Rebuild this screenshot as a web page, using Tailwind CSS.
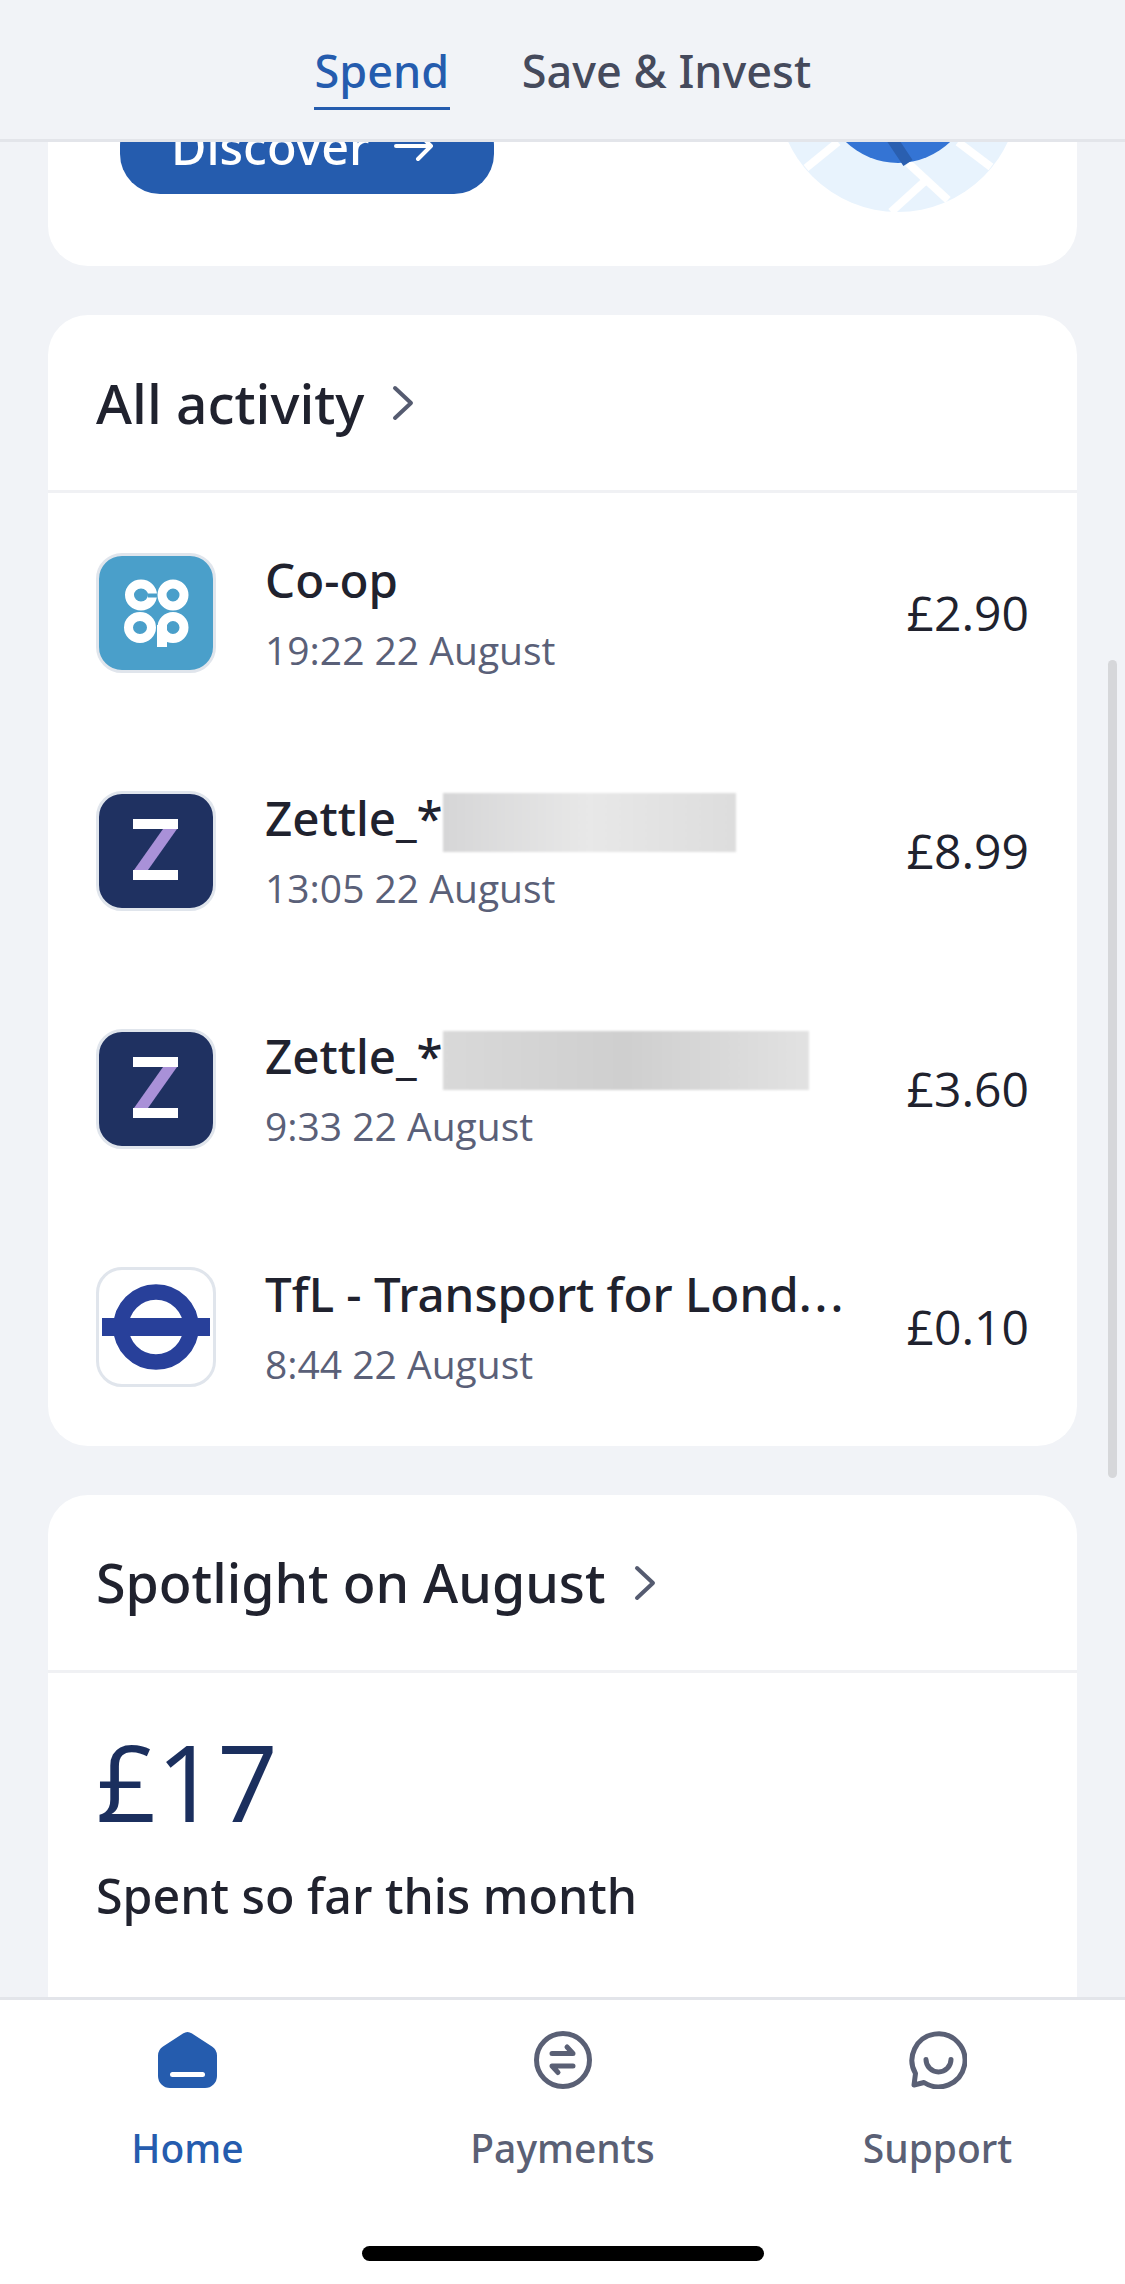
<!DOCTYPE html>
<html lang="en">
  <head>
    <meta charset="UTF-8" />
    <meta name="viewport" content="width=device-width, initial-scale=1.0" />
    <title>Spend</title>
    <script src="https://cdn.jsdelivr.net/npm/@tailwindcss/browser@4"></script>
  </head>
  <body class="bg-[#f1f3f7]">
    <div class="relative w-[1125px] h-[2284px] flex flex-col overflow-hidden font-['Open_Sans',sans-serif] text-[#20222e]">
      <!-- Top tabs -->
      <header class="h-[142px] shrink-0 flex justify-center gap-[72px] border-b-[3px] border-[#e3e5ea] bg-[#f1f3f7]">
        <div class="h-[110px] pt-[41px] border-b-[3px] border-[#255cae] text-[#255cae] text-[45px] leading-[60px] font-['Noto_Sans',sans-serif] font-medium w-[136px] text-center">Spend</div>
        <div class="pt-[41px] text-[#454a5c] text-[45px] leading-[60px] font-['Noto_Sans',sans-serif] font-medium">Save &amp; Invest</div>
      </header>

      <main class="flex-1 min-h-0 overflow-hidden flex flex-col gap-[49px] px-[48px]">
        <!-- Promo card, scrolled under the tabs -->
        <section class="h-[124px] shrink-0 flex justify-between pl-[72px] pr-[56px] bg-white rounded-b-[40px]">
          <div class="w-[374px] h-[88px] -mt-[36px] pb-[8px] flex items-center pl-[51px] gap-[24px] rounded-[40px] bg-[#255cae] text-white text-[48.5px] font-['Noto_Sans',sans-serif] font-medium">
            <span class="leading-[60px]">Discover</span>
            <svg class="w-[40px] h-[34px]" viewBox="0 0 40 34" fill="none" stroke="#fff" stroke-width="4" stroke-linecap="round" stroke-linejoin="round"><path d="M2 17h35M24 4l13 13-13 13" /></svg>
          </div>
          <svg class="w-[240px] h-[72px]" viewBox="780 142 240 72">
            <circle cx="897" cy="91" r="121" fill="#e8f3fd" />
            <path d="M837 142l-32 26M957 142l33 25M907 163l40 37M923 182l-33 30" stroke="#fff" stroke-width="8" fill="none" />
            <circle cx="897" cy="88" r="75" fill="#3474d4" />
            <path d="M885 130l22 33" stroke="#2a5fb0" stroke-width="11" fill="none" />
          </svg>
        </section>

        <!-- All activity -->
        <section class="shrink-0 bg-white rounded-[40px]">
          <div class="h-[178px] flex items-center gap-[28px] px-[48px] border-b-[3px] border-[#f0f1f4]">
            <h2 class="text-[55px] leading-[68px] font-['Noto_Sans',sans-serif] font-medium">All activity</h2>
            <svg class="w-[22px] h-[36px]" viewBox="0 0 22 36" fill="none" stroke="#555b70" stroke-width="4" stroke-linecap="round" stroke-linejoin="round"><path d="M3 3l16 15L3 33" /></svg>
          </div>
          <div class="flex flex-col gap-[118px] pt-[60px] pb-[59px] pl-[48px] pr-[48px]">
            <div class="h-[120px] flex items-center">
              <div class="w-[120px] h-[120px] shrink-0 rounded-[26px] border-[3px] border-[#e0e5ec] bg-[#4a9fca] overflow-hidden">
                <svg class="w-full h-full" viewBox="3 3 114 114">
                  <ellipse cx="45" cy="42" rx="11.5" ry="11" fill="none" stroke="#fff" stroke-width="9" />
                  <rect x="52" y="40.5" width="9" height="4" fill="#4a9fca" />
                  <ellipse cx="77" cy="42" rx="11" ry="11" fill="none" stroke="#fff" stroke-width="9" />
                  <ellipse cx="44" cy="74.5" rx="11.5" ry="11" fill="none" stroke="#fff" stroke-width="9" />
                  <ellipse cx="77" cy="74.5" rx="11" ry="11" fill="none" stroke="#fff" stroke-width="9" />
                  <rect x="61" y="72" width="10" height="22" fill="#fff" />
                </svg>
              </div>
              <div class="flex-1 min-w-0 pl-[49px]">
                <p class="text-[47.5px] leading-[60px] font-['Noto_Sans',sans-serif] font-medium">Co-op</p>
                <p class="mt-[14px] text-[39px] leading-[52px] text-[#5a6078]">19:22 22 August</p>
              </div>
              <p class="text-[48px] leading-[64px] pl-[24px]">£2.90</p>
            </div>

            <div class="h-[120px] flex items-center">
              <div class="w-[120px] h-[120px] shrink-0 rounded-[26px] border-[3px] border-[#e0e5ec] bg-[#1f3161] overflow-hidden">
                <svg class="w-full h-full" viewBox="3 3 114 114">
                  <path d="M37 28h45v10H37zM37 79h45v10H37z" fill="#fff" />
                  <path d="M67 38h14L52 79H38z" fill="#a991d8" />
                </svg>
              </div>
              <div class="flex-1 min-w-0 pl-[49px]">
                <div class="flex items-start h-[60px]">
                  <p class="text-[47.5px] leading-[60px] font-['Noto_Sans',sans-serif] font-medium">Zettle_*</p>
                  <div class="mt-[5px] w-[293px] h-[59px] bg-gradient-to-r from-[#d6d6d7] via-[#e8e8e8] to-[#dddddd] blur-[1px]"></div>
                </div>
                <p class="mt-[14px] text-[39px] leading-[52px] text-[#5a6078]">13:05 22 August</p>
              </div>
              <p class="text-[48px] leading-[64px] pl-[24px]">£8.99</p>
            </div>

            <div class="h-[120px] flex items-center">
              <div class="w-[120px] h-[120px] shrink-0 rounded-[26px] border-[3px] border-[#e0e5ec] bg-[#1f3161] overflow-hidden">
                <svg class="w-full h-full" viewBox="3 3 114 114">
                  <path d="M37 28h45v10H37zM37 79h45v10H37z" fill="#fff" />
                  <path d="M67 38h14L52 79H38z" fill="#a991d8" />
                </svg>
              </div>
              <div class="flex-1 min-w-0 pl-[49px]">
                <div class="flex items-start h-[60px]">
                  <p class="text-[47.5px] leading-[60px] font-['Noto_Sans',sans-serif] font-medium">Zettle_*</p>
                  <div class="mt-[5px] w-[366px] h-[59px] bg-gradient-to-r from-[#d9d9d9] via-[#cfcfcf] to-[#e2e2e2] blur-[1px]"></div>
                </div>
                <p class="mt-[14px] text-[39px] leading-[52px] text-[#5a6078]">9:33 22 August</p>
              </div>
              <p class="text-[48px] leading-[64px] pl-[24px]">£3.60</p>
            </div>

            <div class="h-[120px] flex items-center">
              <div class="w-[120px] h-[120px] shrink-0 rounded-[26px] border-[3px] border-[#e0e5ec] bg-white overflow-hidden">
                <svg class="w-full h-full" viewBox="3 3 114 114">
                  <circle cx="60" cy="60" r="35" fill="none" stroke="#28409a" stroke-width="15.5" />
                  <rect x="6" y="51" width="108" height="18" fill="#28409a" />
                </svg>
              </div>
              <div class="flex-1 min-w-0 pl-[49px]">
                <p class="text-[47.5px] leading-[60px] font-['Noto_Sans',sans-serif] font-medium whitespace-nowrap">TfL - Transport for Lond<span class="tracking-[3px]">...</span></p>
                <p class="mt-[14px] text-[39px] leading-[52px] text-[#5a6078]">8:44 22 August</p>
              </div>
              <p class="text-[48px] leading-[64px] pl-[24px]">£0.10</p>
            </div>
          </div>
        </section>

        <!-- Spotlight -->
        <section class="flex-1 bg-white rounded-t-[40px]">
          <div class="h-[178px] flex items-center gap-[28px] px-[48px] border-b-[3px] border-[#f0f1f4]">
            <h2 class="text-[53.7px] leading-[68px] font-['Noto_Sans',sans-serif] font-medium">Spotlight on August</h2>
            <svg class="w-[22px] h-[36px]" viewBox="0 0 22 36" fill="none" stroke="#555b70" stroke-width="4" stroke-linecap="round" stroke-linejoin="round"><path d="M3 3l16 15L3 33" /></svg>
          </div>
          <div class="px-[48px] pt-[38px]">
            <p class="text-[106px] leading-[140px] text-[#1b2f5e]">£17</p>
            <p class="mt-[12px] text-[48.3px] leading-[64px] font-['Noto_Sans',sans-serif] font-medium">Spent so far this month</p>
          </div>
        </section>
      </main>

      <!-- Bottom nav -->
      <nav class="h-[287px] shrink-0 bg-white border-t-[3px] border-[#e3e5ea] flex flex-col">
        <div class="grid grid-cols-3 pt-[31px]">
          <a class="flex flex-col items-center text-[#255cae]">
            <svg class="w-[59px] h-[58px]" viewBox="0 -1 59 58">
              <path d="M25 1.5a8 8 0 0 1 9 0L54 14.5a11 11 0 0 1 5 9V44a12 12 0 0 1-12 12H12A12 12 0 0 1 0 44V23.5a11 11 0 0 1 5-9z" fill="#255cae" />
              <rect x="12" y="40" width="35" height="5" rx="2.5" fill="#fff" />
            </svg>
            <span class="mt-[33px] text-[39px] leading-[52px] font-['Noto_Sans',sans-serif] font-medium">Home</span>
          </a>
          <a class="flex flex-col items-center text-[#5a6075]">
            <svg class="w-[58px] h-[58px]" viewBox="0 0 58 58" fill="none" stroke="#5a6075" stroke-width="5" stroke-linecap="round" stroke-linejoin="round">
              <circle cx="29" cy="29" r="26.5" />
              <path d="M18 22.5h21L33 16M39 35H18l6 6.5" />
            </svg>
            <span class="mt-[33px] text-[39px] leading-[52px] font-['Noto_Sans',sans-serif] font-medium">Payments</span>
          </a>
          <a class="flex flex-col items-center text-[#5a6075]">
            <svg class="w-[58px] h-[58px]" viewBox="0 0 58 58" fill="none" stroke="#5a6075" stroke-width="5" stroke-linecap="round" stroke-linejoin="round">
              <path d="M15 51.5A26.5 26.5 0 1 0 6.5 42.5L5 54z" />
              <path d="M17 28.5a12.5 12.5 0 0 0 25 0" />
            </svg>
            <span class="mt-[33px] text-[39px] leading-[52px] font-['Noto_Sans',sans-serif] font-medium">Support</span>
          </a>
        </div>
        <div class="mt-[72px] mx-auto w-[402px] h-[15px] rounded-full bg-black"></div>
      </nav>

      <!-- Scroll indicator overlay -->
      <div class="absolute left-[1108px] top-[660px] w-[9px] h-[818px] rounded-full bg-[#d6d7da]"></div>
    </div>
  </body>
</html>
